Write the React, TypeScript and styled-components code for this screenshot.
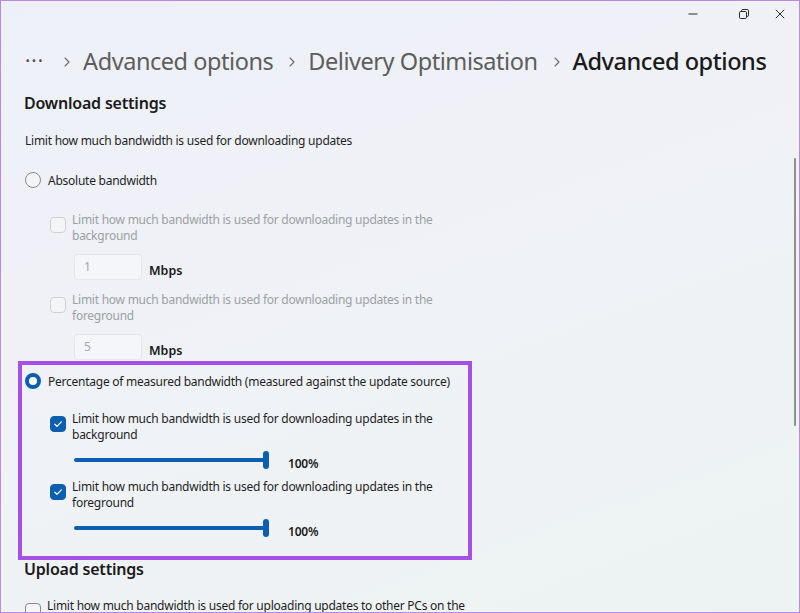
import * as React from 'react';
import styled, { createGlobalStyle } from 'styled-components';

const GlobalStyle = createGlobalStyle`
  html, body {
    margin: 0;
    padding: 0;
  }
  body {
    font-family: "Noto Sans", "Open Sans", sans-serif;
    color: #1b1b1b;
  }
`;

const Window = styled.div`
  width: 800px;
  height: 613px;
  box-sizing: border-box;
  border: 1px solid #b98ad9;
  background: linear-gradient(160deg, #eef0f8 0%, #eff2f6 55%, #edf3f2 100%);
  position: relative;
  overflow: hidden;
  display: flex;
  flex-direction: column;
`;

const TitleBar = styled.div`
  height: 29px;
  display: flex;
  justify-content: flex-end;
  align-items: center;
  padding-right: 1px;
`;

const WinButton = styled.div<{ $w: number }>`
  width: ${(p) => p.$w}px;
  height: 26px;
  display: flex;
  align-items: center;
  justify-content: center;
`;

const Breadcrumb = styled.div`
  margin-top: 18px;
  padding-left: 24px;
  height: 32px;
  display: flex;
  align-items: center;
  font-size: 23.5px;
  line-height: 32px;
  white-space: nowrap;
`;

const Crumb = styled.span<{ $current?: boolean }>`
  color: ${(p) => (p.$current ? '#1a1a1a' : '#5d5d5d')};
  font-weight: ${(p) => (p.$current ? 500 : 400)};
  letter-spacing: -0.45px;
`;

const Dots = styled.span`
  color: #4a4a4a;
  font-size: 20px;
  letter-spacing: 1px;
  margin-right: 4px;
`;

const Chevron = styled.span`
  display: inline-flex;
  width: 22px;
  justify-content: center;
  margin: 2px 5px 0 8px;
`;

const Content = styled.div`
  padding-left: 23px;
  display: flex;
  flex-direction: column;
`;

const SectionTitle = styled.div<{ $top: number }>`
  margin-top: ${(p) => p.$top}px;
  font-size: 16px;
  line-height: 24px;
  font-weight: 600;
  letter-spacing: -0.2px;
  color: #1a1a1a;
`;

const Description = styled.div`
  margin-top: 16px;
  padding-left: 1px;
  font-size: 12px;
  letter-spacing: -0.25px;
  line-height: 20px;
  color: #1f1f1f;
`;

const RadioRow = styled.div<{ $top: number }>`
  margin-top: ${(p) => p.$top}px;
  height: 20px;
  display: flex;
  align-items: center;
  gap: 7px;
  padding-left: 1px;
  font-size: 12px;
  letter-spacing: -0.25px;
  white-space: nowrap;
  color: #1f1f1f;
`;

const RadioCircle = styled.span<{ $checked?: boolean }>`
  width: 16px;
  height: 16px;
  box-sizing: border-box;
  border-radius: 50%;
  flex: none;
  border: ${(p) => (p.$checked ? '4.5px solid #0b5eb0' : '1px solid #8b8b8b')};
  background: ${(p) => (p.$checked ? '#ffffff' : '#f3f4f6')};
`;

const CheckRow = styled.div<{ $top: number; $indent?: number }>`
  margin-top: ${(p) => p.$top}px;
  padding-left: ${(p) => p.$indent ?? 26}px;
  display: flex;
  align-items: flex-start;
  gap: 6px;
`;

const CheckBox = styled.span<{ $checked?: boolean; $disabled?: boolean }>`
  width: 16px;
  height: 16px;
  margin-top: 5px;
  box-sizing: border-box;
  border-radius: 4px;
  flex: none;
  display: flex;
  align-items: center;
  justify-content: center;
  border: 1px solid ${(p) => (p.$checked ? '#0b5eb0' : p.$disabled ? '#cfd1d5' : '#8b8b8b')};
  background: ${(p) => (p.$checked ? '#0b5eb0' : '#f4f5f7')};
`;

const CheckText = styled.div<{ $disabled?: boolean; $w?: number }>`
  width: ${(p) => p.$w ?? 390}px;
  font-size: 12px;
  letter-spacing: -0.25px;
  line-height: 16px;
  color: ${(p) => (p.$disabled ? '#9d9fa3' : '#1f1f1f')};
`;

const InputRow = styled.div`
  margin-top: 10px;
  padding-left: 50px;
  height: 26px;
  display: flex;
  align-items: center;
  gap: 7px;
`;

const NumberBox = styled.div`
  width: 68px;
  height: 26px;
  box-sizing: border-box;
  border: 1px solid #e6e7ea;
  border-radius: 4px;
  background: #f5f6f9;
  color: #a3a5a9;
  font-size: 12px;
  line-height: 24px;
  padding-left: 9px;
`;

const Unit = styled.span`
  font-size: 12.5px;
  font-weight: 600;
  color: #1a1a1a;
  margin-top: 6px;
`;

const Highlight = styled.div`
  margin-top: 1px;
  margin-left: -6px;
  width: 454px;
  box-sizing: border-box;
  border: 4px solid #a64fe6;
  padding: 1px 0 18px 2px;
  display: flex;
  flex-direction: column;
`;

const SliderRow = styled.div`
  margin-top: 7px;
  padding-left: 50px;
  height: 20px;
  display: flex;
  align-items: center;
`;

const Track = styled.div`
  width: 195px;
  height: 20px;
  position: relative;
  display: flex;
  align-items: center;
`;

const Fill = styled.div`
  height: 4px;
  border-radius: 2px;
  background: #0b5eb0;
`;

const Thumb = styled.div`
  position: absolute;
  top: 1px;
  width: 6px;
  height: 18px;
  border-radius: 3px;
  background: #0b5eb0;
`;

const SliderValue = styled.span`
  margin-left: 19px;
  margin-top: 6px;
  font-size: 12px;
  font-weight: 600;
  letter-spacing: -0.2px;
  color: #1a1a1a;
`;

const Scrollbar = styled.div`
  position: absolute;
  right: 3px;
  top: 157px;
  width: 2px;
  height: 268px;
  border-radius: 1px;
  background: #8e9090;
`;

const Check = () => (
  <svg width="10" height="10" viewBox="0 0 10 10">
    <path d="M1.8 5.2 L4 7.3 L8.3 2.8" fill="none" stroke="#fff" strokeWidth="1.2" strokeLinecap="round" strokeLinejoin="round" />
  </svg>
);

const ChevronIcon = () => (
  <svg width="8" height="12" viewBox="0 0 8 12">
    <path d="M2 2 L6 6 L2 10" fill="none" stroke="#6b6b6b" strokeWidth="1.1" strokeLinecap="round" strokeLinejoin="round" />
  </svg>
);

const Slider = ({ value }: { value: number }) => (
  <SliderRow>
    <Track>
      <Fill style={{ width: (value / 100) * 192 }} />
      <Thumb style={{ left: (value / 100) * 189 }} />
    </Track>
    <SliderValue>{value}%</SliderValue>
  </SliderRow>
);

const lineA = 'Limit how much bandwidth is used for downloading updates in the';

export default function App() {
  return (
    <>
      <GlobalStyle />
      <Window>
        <TitleBar>
          <WinButton $w={66}>
            <svg width="10" height="10" viewBox="0 0 10 10">
              <path d="M0.5 5 H9.5" stroke="#2b2b2b" strokeWidth="1" />
            </svg>
          </WinButton>
          <WinButton $w={36}>
            <svg width="10" height="10" viewBox="0 0 10 10">
              <rect x="0.5" y="2.5" width="7" height="7" rx="1.2" fill="none" stroke="#2b2b2b" strokeWidth="1" />
              <path d="M2.5 2.5 V1.8 A1.3 1.3 0 0 1 3.8 0.5 H8.2 A1.3 1.3 0 0 1 9.5 1.8 V6.2 A1.3 1.3 0 0 1 8.2 7.5 H7.5" fill="none" stroke="#2b2b2b" strokeWidth="1" />
            </svg>
          </WinButton>
          <WinButton $w={36}>
            <svg width="10" height="10" viewBox="0 0 10 10">
              <path d="M0.8 0.8 L9.2 9.2 M9.2 0.8 L0.8 9.2" stroke="#2b2b2b" strokeWidth="1" />
            </svg>
          </WinButton>
        </TitleBar>

        <Breadcrumb>
          <Dots>···</Dots>
          <Chevron><ChevronIcon /></Chevron>
          <Crumb>Advanced options</Crumb>
          <Chevron><ChevronIcon /></Chevron>
          <Crumb>Delivery Optimisation</Crumb>
          <Chevron><ChevronIcon /></Chevron>
          <Crumb $current>Advanced options</Crumb>
        </Breadcrumb>

        <Content>
          <SectionTitle $top={14}>Download settings</SectionTitle>
          <Description>Limit how much bandwidth is used for downloading updates</Description>

          <RadioRow $top={19}>
            <RadioCircle />
            Absolute bandwidth
          </RadioRow>
          <CheckRow $top={22}>
            <CheckBox $disabled />
            <CheckText $disabled>{lineA} background</CheckText>
          </CheckRow>
          <InputRow>
            <NumberBox>1</NumberBox>
            <Unit>Mbps</Unit>
          </InputRow>
          <CheckRow $top={12}>
            <CheckBox $disabled />
            <CheckText $disabled>{lineA} foreground</CheckText>
          </CheckRow>
          <InputRow>
            <NumberBox>5</NumberBox>
            <Unit>Mbps</Unit>
          </InputRow>

          <Highlight>
            <RadioRow $top={5}>
              <RadioCircle $checked />
              Percentage of measured bandwidth (measured against the update source)
            </RadioRow>
            <CheckRow $top={20}>
              <CheckBox $checked><Check /></CheckBox>
              <CheckText>{lineA} background</CheckText>
            </CheckRow>
            <Slider value={100} />
            <CheckRow $top={9}>
              <CheckBox $checked><Check /></CheckBox>
              <CheckText>{lineA} foreground</CheckText>
            </CheckRow>
            <Slider value={100} />
          </Highlight>

          <SectionTitle $top={-3}>Upload settings</SectionTitle>
          <CheckRow $top={17} $indent={1}>
            <CheckBox />
            <CheckText $w={460}>Limit how much bandwidth is used for uploading updates to other PCs on the Internet</CheckText>
          </CheckRow>
        </Content>
        <Scrollbar />
      </Window>
    </>
  );
}
